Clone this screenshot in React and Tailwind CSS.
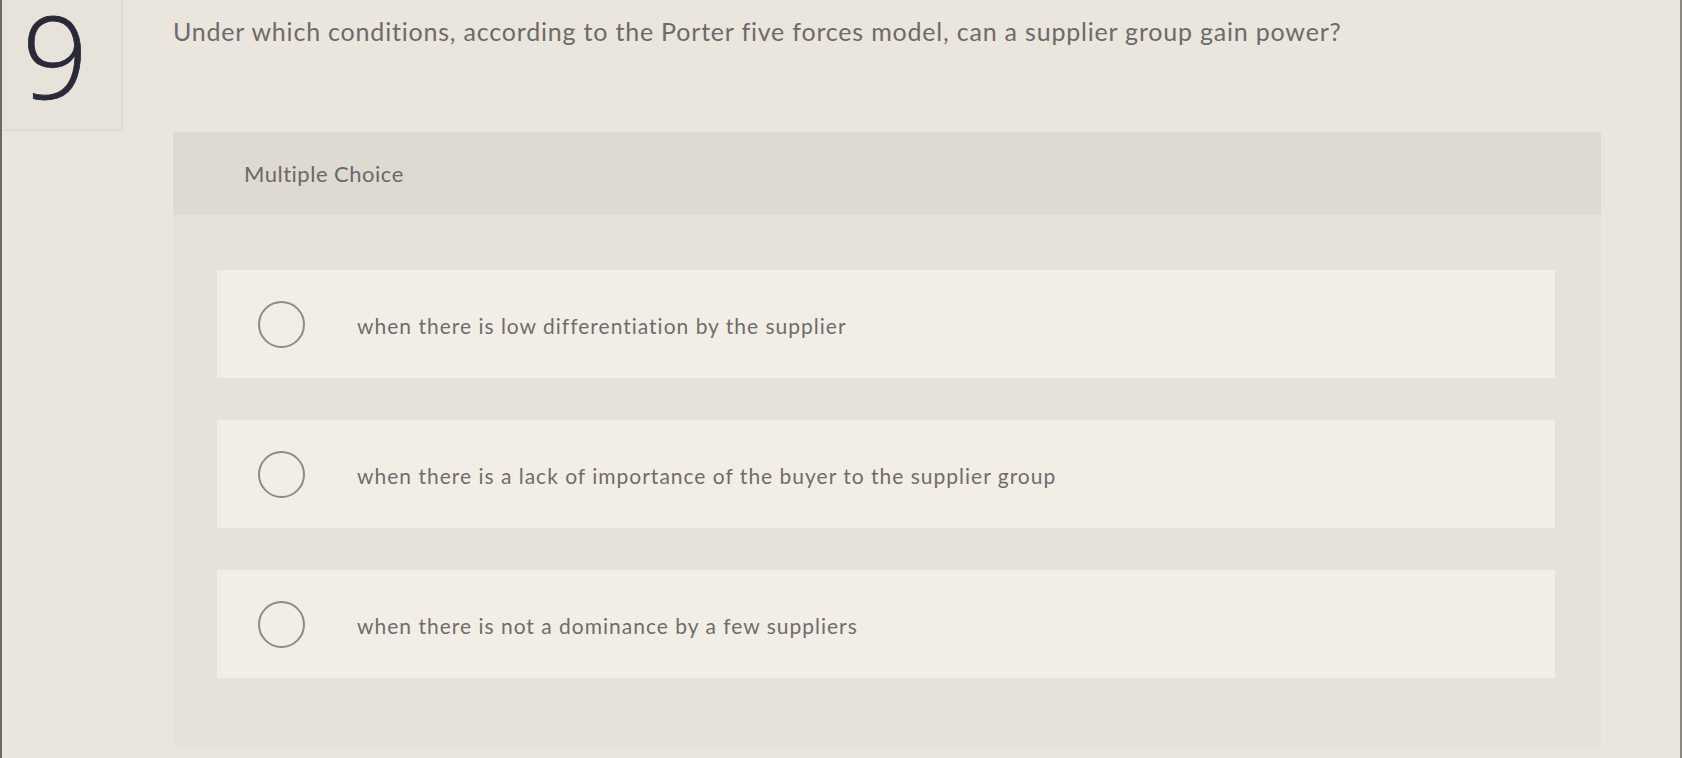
export default function App() {
  const options = [
    "when there is low differentiation by the supplier",
    "when there is a lack of importance of the buyer to the supplier group",
    "when there is not a dominance by a few suppliers",
  ];
  return (
    <div className="w-[1682px] h-[758px] bg-[#eae5dd] flex overflow-hidden border-l-2 border-r-2 border-l-[#6d6a66] border-r-[#8a8680]" style={{ fontFamily: "Lato, 'Open Sans', sans-serif" }}>
      <div className="w-[121px] shrink-0">
        <div className="h-[131px] border-r border-b border-[#d9d4cb] bg-[#e7e2da] flex justify-center items-start pt-[3px]">
          <span className="text-[115px] leading-[0.9] text-[#2a2938] font-light ml-[-14px]" style={{ fontFamily: "'Open Sans', sans-serif", WebkitTextStroke: "0.8px #2a2938" }}>9</span>
        </div>
      </div>
      <div className="flex-1 pl-[50px] pr-[79px]">
        <div className="h-[132px] pt-[16px]">
          <p className="text-[25px] leading-[30px] text-[#6c6b69] tracking-[0.8px]">
            Under which conditions, according to the Porter five forces model, can a supplier group gain power?
          </p>
        </div>
        <div className="bg-[#e6e2da] h-[615px]">
          <div className="h-[83px] bg-[#dedad2] flex items-center pl-[71px]">
            <span className="text-[22px] text-[#6a6966] tracking-[0.5px]">Multiple Choice</span>
          </div>
          <div className="pt-[55px] pl-[44px] pr-[46px] flex flex-col gap-[42px]">
            {options.map((o) => (
              <div key={o} className="h-[108px] bg-[#f2eee6] flex items-center pl-[41px]">
                <div className="w-[47px] h-[47px] rounded-full border-2 border-[#8d8b88] shrink-0" />
                <span className="ml-[52px] mt-[3px] text-[21px] text-[#6e6d6a] tracking-[1px]">{o}</span>
              </div>
            ))}
          </div>
        </div>
      </div>
    </div>
  );
}
